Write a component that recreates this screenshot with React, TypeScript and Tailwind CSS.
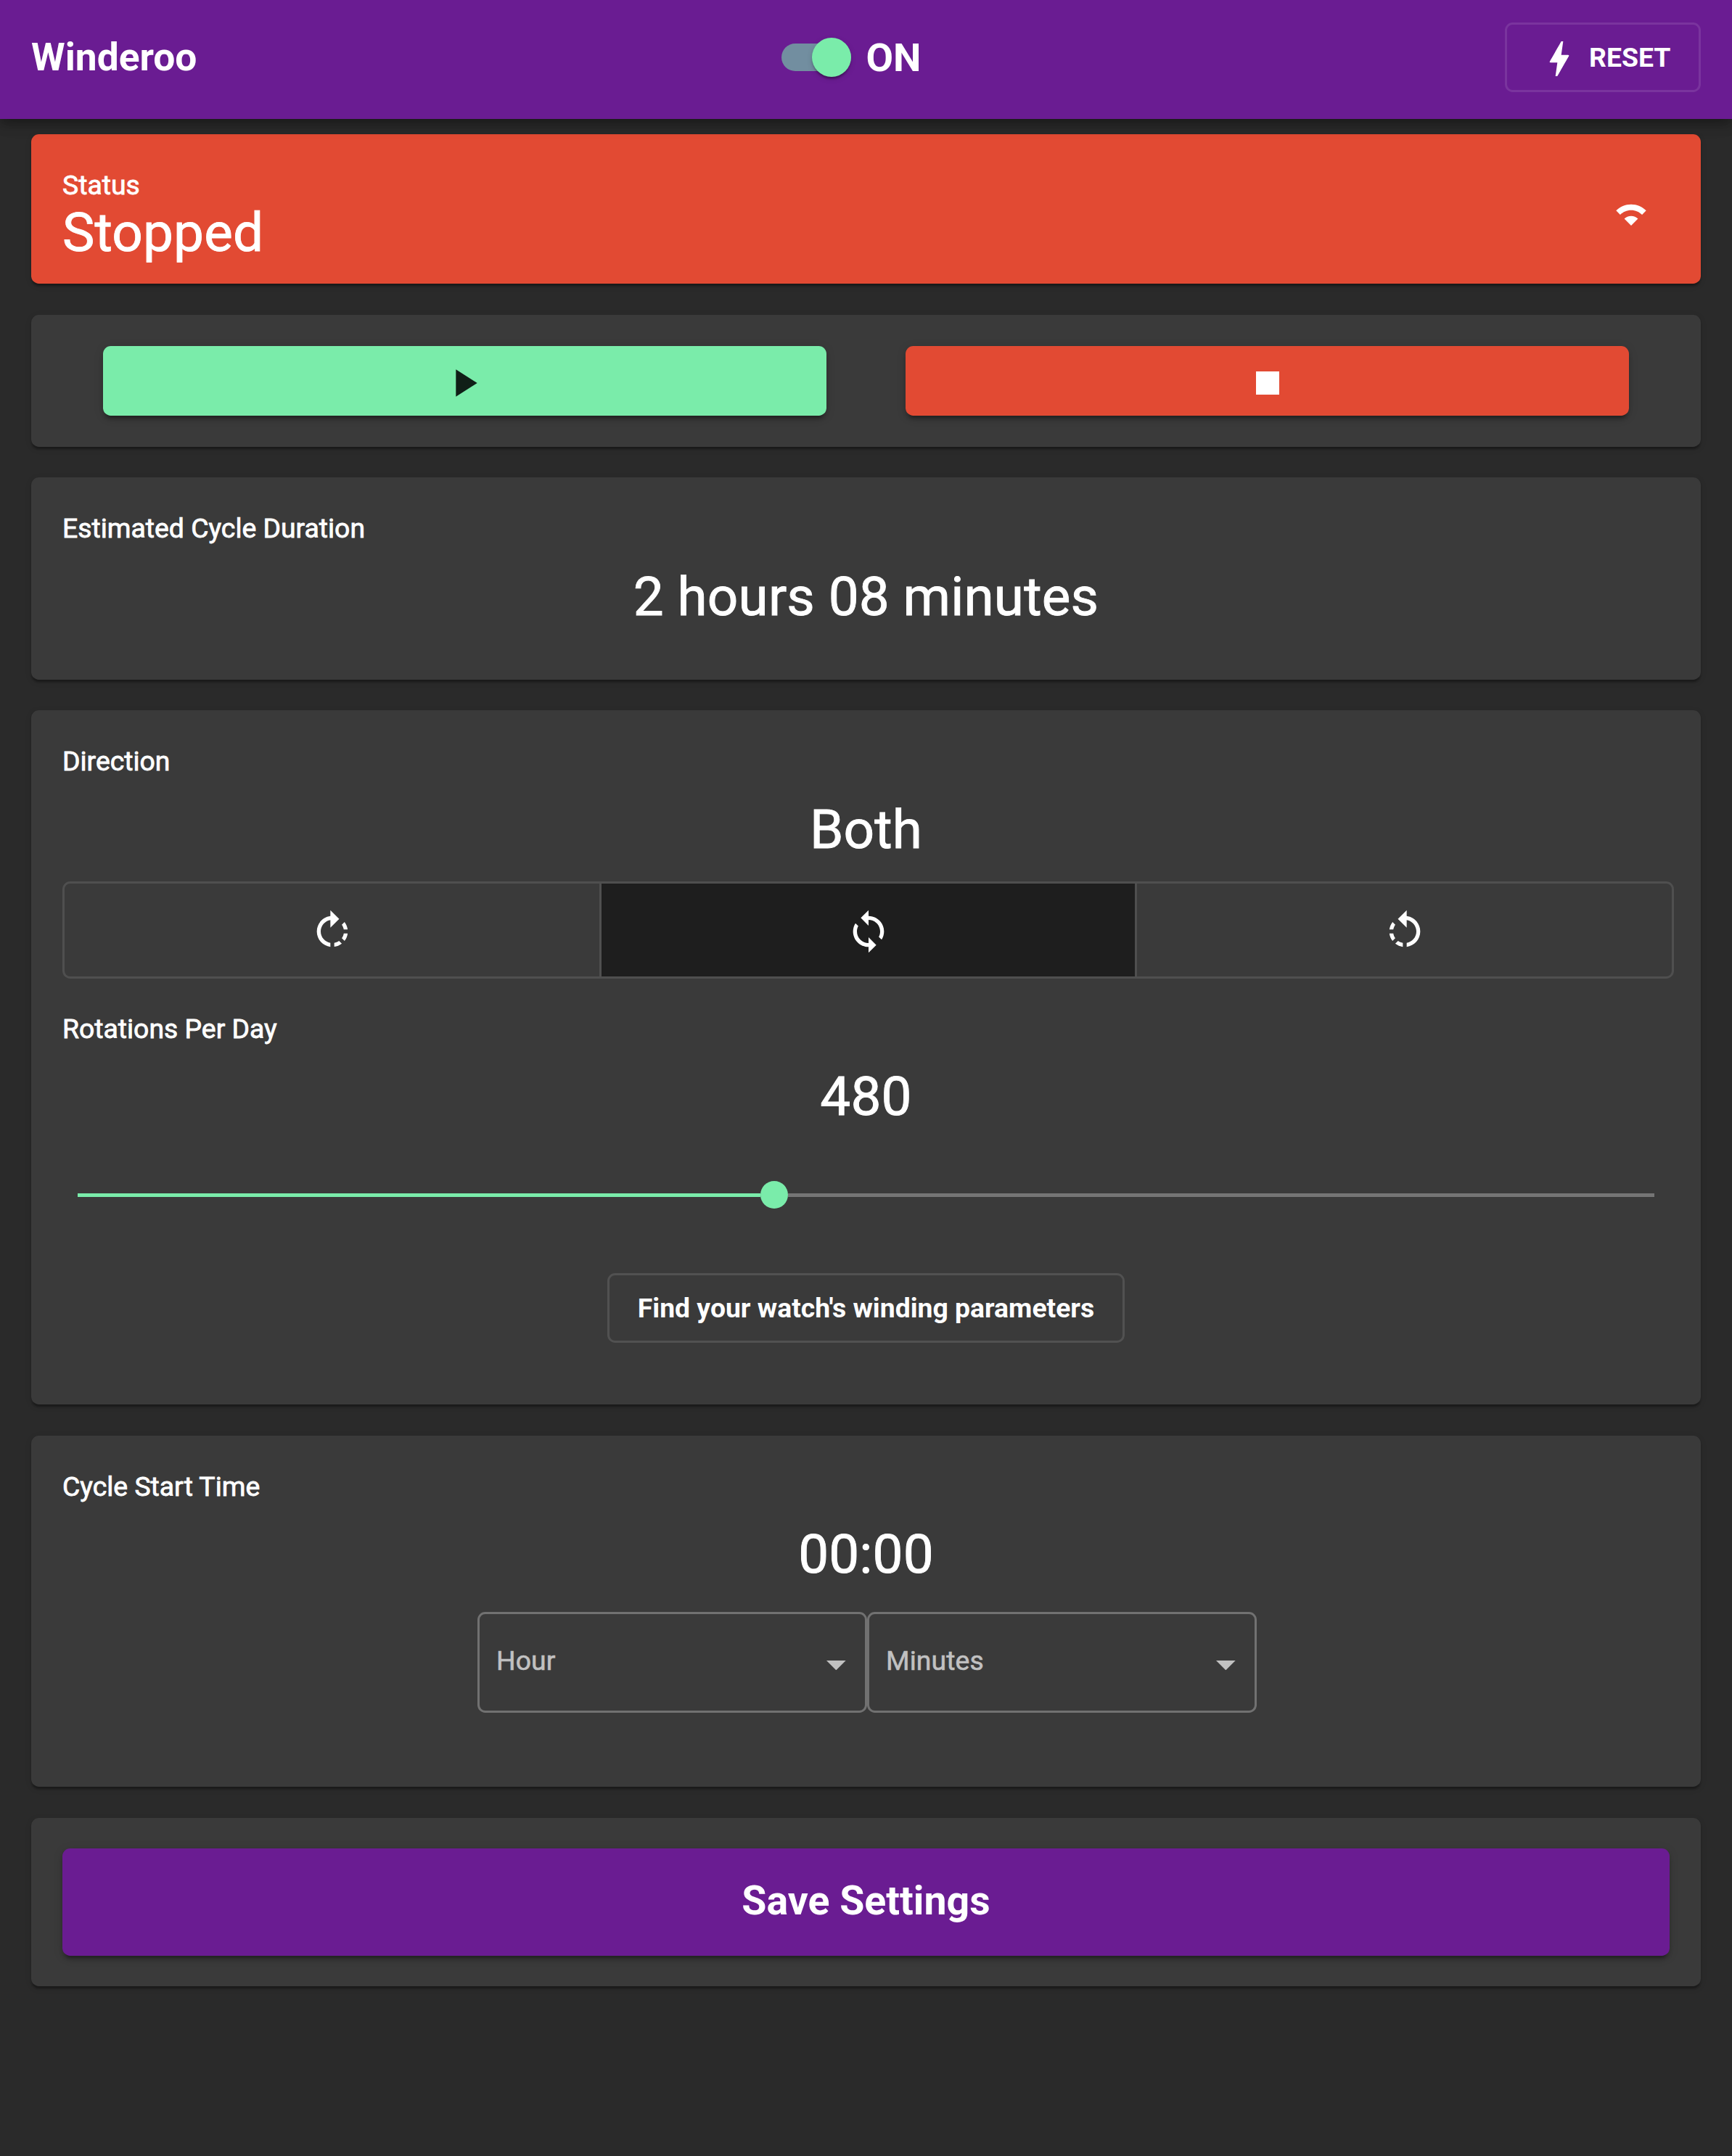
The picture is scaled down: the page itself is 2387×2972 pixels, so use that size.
import React from "react";

type IconProps = { d: string; className?: string };

function Icon({ d, className = "" }: IconProps) {
  return (
    <svg viewBox="0 0 24 24" fill="currentColor" className={`size-16 shrink-0 ${className}`} aria-hidden="true">
      <path d={d} />
    </svg>
  );
}

const icons = {
  bolt: "M11 21h-1l1-7H7.5c-.58 0-.57-.32-.38-.66.19-.34.05-.08.07-.12C8.48 10.94 10.42 7.54 13 3h1l-1 7h3.5c.49 0 .56.33.47.51l-.07.15C12.96 17.55 11 21 11 21z",
  wifi: "M15.53 17.46L12 21l-3.53-3.54C9.37 16.56 10.62 16 12 16s2.63.56 3.53 1.46zM12 10c-3.03 0-5.78 1.23-7.76 3.22l2.12 2.12C7.8 13.9 9.8 13 12 13s4.2.9 5.64 2.35l2.12-2.12C17.78 11.23 15.03 10 12 10z",
  play: "M8 5v14l11-7z",
  stop: "M6 6h12v12H6z",
  right:
    "M15.55 5.55L11 1v3.07C7.06 4.56 4 7.92 4 12s3.05 7.44 7 7.93v-2.02c-2.84-.48-5-2.94-5-5.91s2.16-5.43 5-5.91V10l4.55-4.45zM19.93 11c-.17-1.39-.72-2.73-1.62-3.89l-1.42 1.42c.54.75.88 1.6 1.02 2.47h2.02zM13 17.9v2.02c1.39-.17 2.74-.71 3.9-1.61l-1.44-1.44c-.75.54-1.59.89-2.46 1.03zm3.89-2.42l1.42 1.41c.9-1.16 1.45-2.5 1.62-3.89h-2.02c-.14.87-.48 1.72-1.02 2.48z",
  both: "M12 4V1L8 5l4 4V6c3.31 0 6 2.69 6 6 0 1.01-.25 1.97-.7 2.8l1.46 1.46C19.54 15.03 20 13.57 20 12c0-4.42-3.58-8-8-8zm0 14c-3.31 0-6-2.69-6-6 0-1.01.25-1.97.7-2.8L5.24 7.74C4.46 8.97 4 10.43 4 12c0 4.42 3.58 8 8 8v3l4-4-4-4v3z",
  left: "M7.11 8.53L5.7 7.11C4.8 8.27 4.24 9.61 4.07 11h2.02c.14-.88.49-1.72 1.02-2.47zM6.09 13H4.07c.17 1.39.72 2.73 1.62 3.89l1.41-1.42c-.52-.75-.87-1.59-1.01-2.47zm1.01 5.32c1.16.9 2.51 1.44 3.9 1.61V17.9c-.87-.15-1.71-.49-2.46-1.03L7.1 18.32zM13 4.07V1L8.45 5.55 13 10V6.09c2.84.48 5 2.94 5 5.91s-2.16 5.43-5 5.91v2.02c3.95-.49 7-3.85 7-7.93s-3.05-7.44-7-7.93z",
};

const cardShadow =
  "shadow-[0_5.3px_2.7px_-2.7px_rgba(0,0,0,.2),0_2.7px_2.7px_0_rgba(0,0,0,.14),0_2.7px_8px_0_rgba(0,0,0,.12)]";
const raisedShadow =
  "shadow-[0_8px_2.7px_-5.3px_rgba(0,0,0,.2),0_5.3px_5.3px_0_rgba(0,0,0,.14),0_2.7px_13.3px_0_rgba(0,0,0,.12)]";

function Card({ className = "", children }: { className?: string; children: React.ReactNode }) {
  return <section className={`rounded-[10.67px] bg-[#3a3a3a] px-[43px] ${cardShadow} ${className}`}>{children}</section>;
}

function Label({ className = "", children }: { className?: string; children: React.ReactNode }) {
  return (
    <h2 className={`text-[37.33px] leading-[54px] font-normal [-webkit-text-stroke:0.8px_currentColor] ${className}`}>
      {children}
    </h2>
  );
}

function Value({ className = "", children }: { className?: string; children: React.ReactNode }) {
  return (
    <p
      className={`text-center text-[74.67px] leading-[87px] font-normal tracking-[0.15px] [-webkit-text-stroke:0.9px_currentColor] ${className}`}
    >
      {children}
    </p>
  );
}

function Select({ label }: { label: string }) {
  return (
    <button className="flex h-[139px] w-[537px] items-center justify-between rounded-[10.67px] border-[3px] border-[#717171] pr-[26px] pl-[23px] text-[37.33px] leading-[44px] text-[#c1c1c1]">
      <span className="mb-[5px] tracking-[0.1px] [-webkit-text-stroke:0.6px_currentColor]">{label}</span>
      <svg viewBox="0 0 10 5" fill="currentColor" className="mt-[8px] h-[13.33px] w-[26.67px]" aria-hidden="true">
        <path d="M0 0l5 5 5-5z" />
      </svg>
    </button>
  );
}

export default function App() {
  return (
    <div className="min-h-[2972px] bg-[#2a2a2a] font-[Roboto,sans-serif] text-white antialiased">
      <header className="relative z-10 flex h-[164px] items-center justify-between bg-[#6a1c92] px-[43px] pb-[6px] shadow-[0_5.3px_10.7px_-2.7px_rgba(0,0,0,.2),0_10.7px_13.3px_0_rgba(0,0,0,.14),0_2.7px_26.7px_0_rgba(0,0,0,.12)]">
        <h1 className="w-[230px] text-[53.33px] leading-[62px] font-bold">Winderoo</h1>

        <div className="flex items-center gap-[20px]">
          <div className="flex h-[38px] w-[96px] items-center justify-end rounded-full bg-[#728ea0]">
            <span className="size-[54px] shrink-0 rounded-full bg-[#7aecaa] shadow-[0_5.3px_2.7px_-2.7px_rgba(0,0,0,.2),0_2.7px_2.7px_0_rgba(0,0,0,.14),0_2.7px_8px_0_rgba(0,0,0,.12)]" />
          </div>
          <span className="text-[54.5px] leading-[62px] font-bold">ON</span>
        </div>

        <button className="flex h-[96px] w-[270px] items-center rounded-[10.67px] border-[3px] border-white/11 pl-[40px] text-[37.33px] leading-[44px] font-bold">
          <Icon d={icons.bolt} className="mt-[4px]" />
          <span className="ml-[9px]">RESET</span>
        </button>
      </header>

      <main className="px-[43px] pt-[21px]">
        <section
          className={`flex h-[206px] items-start justify-between rounded-[10.67px] bg-[#e24a33] pt-[43px] pr-[64px] pl-[43px] ${cardShadow}`}
        >
          <div>
            <Label>Status</Label>
            <p className="text-[74.67px] leading-[77px] tracking-[0.15px] [-webkit-text-stroke:0.9px_currentColor]">
              Stopped
            </p>
          </div>
          <Icon d={icons.wifi} className="mt-[27px]" />
        </section>

        <Card className="mt-[43px] flex h-[182px] justify-center gap-[109px] pt-[43px]">
          <button
            className={`flex h-[96px] w-[997px] items-center justify-center rounded-[10.67px] bg-[#7aecaa] pr-[3px] text-[#101f17] ${raisedShadow}`}
          >
            <Icon d={icons.play} className="mt-[5px]" />
          </button>
          <button
            className={`flex h-[96px] w-[997px] items-center justify-center rounded-[10.67px] bg-[#e24a33] ${raisedShadow}`}
          >
            <Icon d={icons.stop} className="mt-[5px]" />
          </button>
        </Card>

        <Card className="mt-[42px] h-[279px] pt-[43px]">
          <Label>Estimated Cycle Duration</Label>
          <Value className="mt-[24px]">2 hours 08 minutes</Value>
        </Card>

        <Card className="mt-[42px] h-[957px] pt-[43px]">
          <Label>Direction</Label>
          <Value className="mt-[24px]">Both</Value>

          <div className="mt-[28px] flex h-[134px] w-[2221px] overflow-hidden rounded-[10.67px] border-[3px] border-[#4f4f4f]">
            <button className="flex w-[737px] items-center justify-center">
              <Icon d={icons.right} className="mt-[3px]" />
            </button>
            <button className="flex w-[738px] items-center justify-center border-l-[3px] border-[#4f4f4f] bg-[#1e1e1e]">
              <Icon d={icons.both} className="mt-[3px]" />
            </button>
            <button className="flex flex-1 items-center justify-center border-l-[3px] border-[#4f4f4f]">
              <Icon d={icons.left} className="mt-[3px]" />
            </button>
          </div>

          <Label className="mt-[42px]">Rotations Per Day</Label>
          <Value className="mt-[23px]">480</Value>

          <div className="mx-[21px] mt-[73px] flex h-[38px] items-center">
            <div className="h-[5px] w-[941px] bg-[#7aecaa]" />
            <div className="size-[38px] shrink-0 rounded-full bg-[#7aecaa]" />
            <div className="h-[5px] flex-1 bg-[#757575]" />
          </div>

          <div className="mt-[89px] flex justify-center">
            <button className="flex h-[96px] w-[713px] items-center justify-center rounded-[10.67px] border-[3px] border-[#515151] text-[37.33px] leading-[44px] font-bold">
              Find your watch's winding parameters
            </button>
          </div>
        </Card>

        <Card className="mt-[43px] h-[484px] pt-[43px]">
          <Label>Cycle Start Time</Label>
          <Value className="mt-[23px]">00:00</Value>
          <div className="mt-[36px] ml-[3px] flex justify-center">
            <Select label="Hour" />
            <Select label="Minutes" />
          </div>
        </Card>

        <Card className="mt-[43px] h-[232px] pt-[42px]">
          <button
            className={`flex h-[148px] w-full items-center justify-center rounded-[10.67px] bg-[#6a1c92] pb-[3px] text-[55.47px] leading-[65px] font-bold ${raisedShadow}`}
          >
            Save Settings
          </button>
        </Card>
      </main>
    </div>
  );
}
